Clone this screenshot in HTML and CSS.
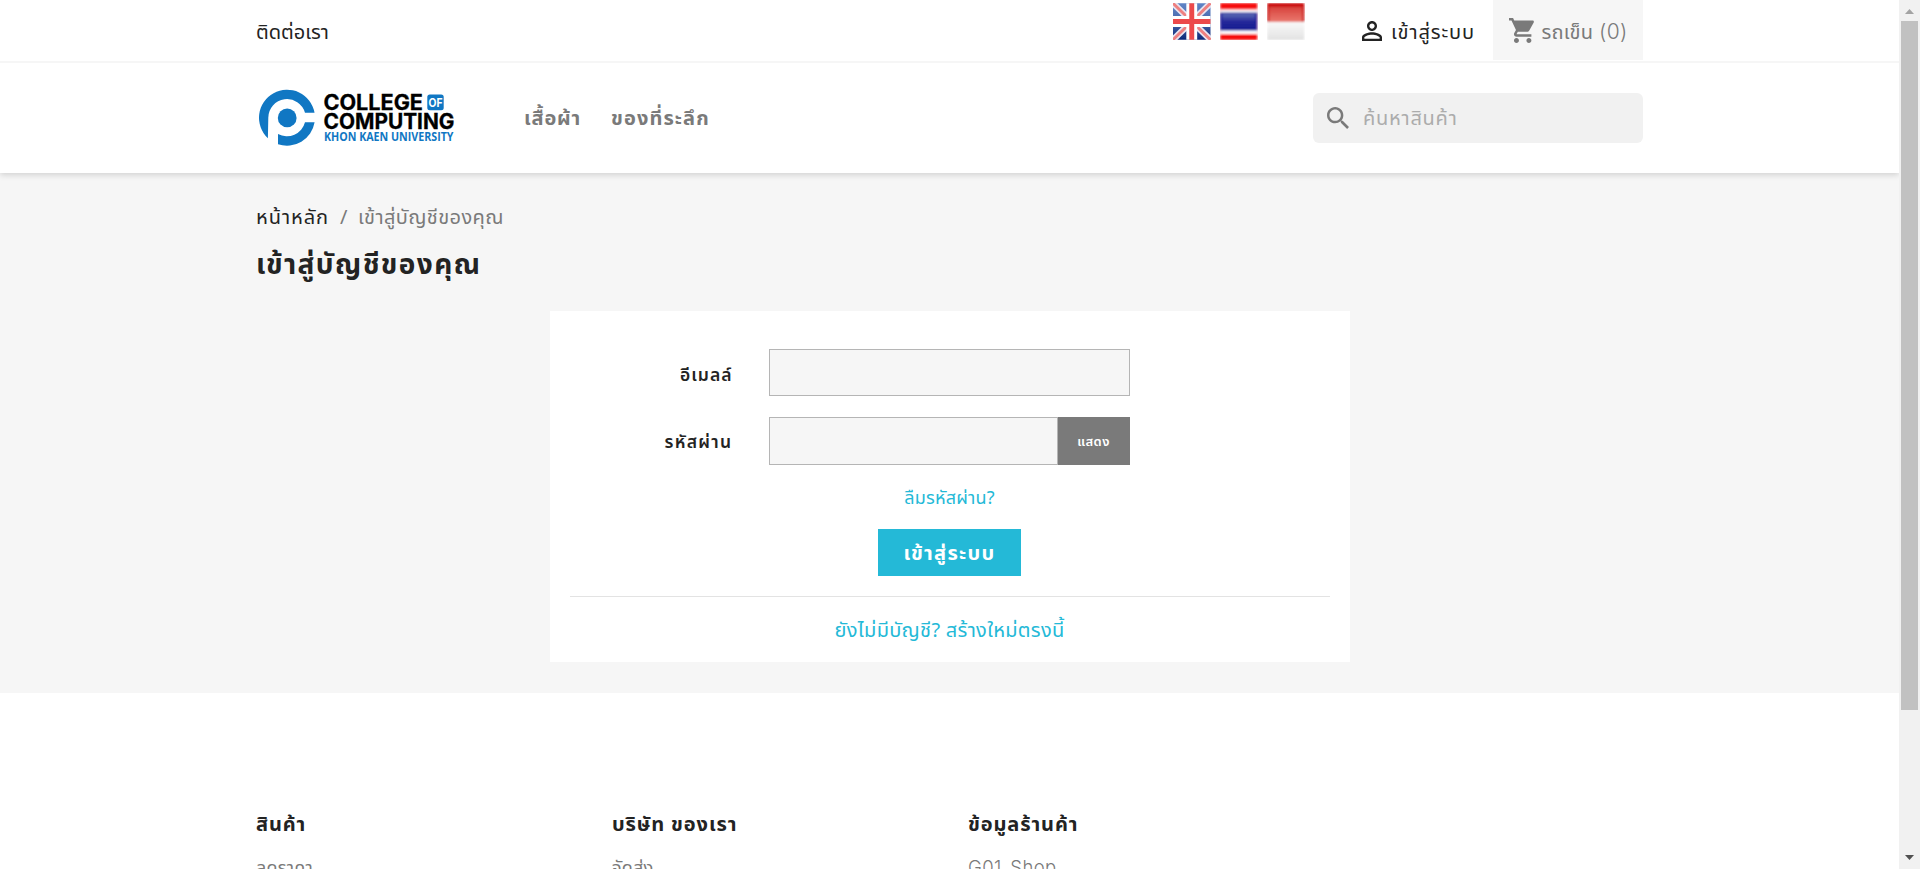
FILE: index.html
```html
<!DOCTYPE html>
<html lang="th">
<head>
<meta charset="utf-8">
<title>เข้าสู่บัญชีของคุณ</title>
<link rel="stylesheet" href="styles.css">
</head>
<body>
<div class="page">
  <header class="header">
    <nav class="topbar">
      <div class="container topbar-row">
        <a class="contact">ติดต่อเรา</a>
        <div class="flags">
          <svg class="flag" viewBox="0 0 38 37">
            <defs>
              <linearGradient id="uk" x2="0" y2="1"><stop offset="0" stop-color="#5f84c6"/><stop offset=".5" stop-color="#4868ac"/><stop offset="1" stop-color="#0c2878"/></linearGradient>
              <linearGradient id="th" x2="0" y2="1"><stop offset="0" stop-color="#5c6cb4"/><stop offset=".5" stop-color="#26289a"/><stop offset="1" stop-color="#141c90"/></linearGradient>
              <linearGradient id="idr" x2="0" y2="1"><stop offset="0" stop-color="#d8433c"/><stop offset="1" stop-color="#ea7a70"/></linearGradient>
              <linearGradient id="idw" x2="0" y2="1"><stop offset="0" stop-color="#fafafa"/><stop offset="1" stop-color="#e2e2e2"/></linearGradient>
              <filter id="soft" x="0" y="0" width="1" height="1"><feGaussianBlur stdDeviation=".8" edgeMode="duplicate"/></filter>
            </defs>
            <g filter="url(#soft)">
              <rect width="38" height="37" fill="url(#uk)"/>
              <path d="M0 0L38 37M38 0L0 37" stroke="#e8e4f0" stroke-width="6.500"/>
              <path d="M0 0L38 37M38 0L0 37" stroke="#ee8080" stroke-width="3"/>
              <path d="M19 0V37M0 18.500H38" stroke="#fff" stroke-width="11"/>
              <path d="M19 0V37M0 18.500H38" stroke="#ec4a4c" stroke-width="5"/>
            </g>
          </svg>
          <svg class="flag" viewBox="0 0 37 37">
            <g filter="url(#soft)">
              <rect width="37" height="37" fill="#f60a10"/>
              <rect y="6.500" width="37" height="24.500" fill="#fff"/>
              <rect y="9.500" width="37" height="18" fill="#141a9a"/>
              <rect x="2" y="11" width="33" height="15" fill="url(#th)"/>
            </g>
          </svg>
          <svg class="flag" viewBox="0 0 37 37">
            <g filter="url(#soft)">
              <rect width="37" height="19" fill="#cb0c0c"/>
              <rect x="2" y="4" width="33" height="15" fill="url(#idr)"/>
              <rect y="19" width="37" height="18" fill="url(#idw)"/>
            </g>
          </svg>
        </div>
        <a class="signin">
          <svg class="icon-user" viewBox="4 4 16 16"><path fill="#232323" d="M12 5.900c1.160 0 2.100.94 2.100 2.100s-.94 2.100-2.100 2.100S9.900 9.160 9.900 8s.94-2.100 2.100-2.100m0 9c2.970 0 6.100 1.460 6.100 2.100v1.100H5.900V17c0-.64 3.130-2.100 6.100-2.100M12 4C9.790 4 8 5.790 8 8s1.790 4 4 4 4-1.790 4-4-1.790-4-4-4zm0 9c-2.670 0-8 1.340-8 4v3h16v-3c0-2.660-5.330-4-8-4z"/></svg>
          <span class="signin-text">เข้าสู่ระบบ</span>
        </a>
        <div class="cart">
          <svg class="icon-cart" viewBox="1 2 20.500 20"><path fill="#7a7a7a" d="M7 18c-1.100 0-1.990.9-1.990 2S5.900 22 7 22s2-.9 2-2-.9-2-2-2zM1 2v2h2l3.600 7.590-1.350 2.450c-.16.28-.25.61-.25.960 0 1.100.9 2 2 2h12v-2H7.420c-.14 0-.25-.11-.25-.25l.03-.12.9-1.630h7.450c.75 0 1.410-.41 1.750-1.030l3.580-6.490c.08-.14.12-.31.12-.48 0-.55-.45-1-1-1H5.210l-.94-2H1zm16 16c-1.100 0-1.990.9-1.990 2s.89 2 1.990 2 2-.9 2-2-.9-2-2-2z"/></svg>
          <span class="cart-text">รถเข็น</span><span class="cart-count">(0)</span>
        </div>
      </div>
    </nav>
    <div class="container mainbar">
      <svg class="logo" viewBox="0 0 202 62">
        <path fill="#1077c3" d="M58.550 25.700A28 28 0 1 0 11.900 51.200L12.300 30.700A18.700 18.700 0 0 1 49 25.700Z"/>
        <path fill="#1077c3" d="M58.600 35.300A28 28 0 0 1 22 57.200V47.100A18.700 18.700 0 0 0 49 35.300Z"/>
        <circle cx="31.200" cy="30.900" r="9.400" fill="#1077c3"/>
        <g class="logo-name">
          <text x="67.500" y="23.300" textLength="99.500" lengthAdjust="spacingAndGlyphs">COLLEGE</text>
          <text x="67.500" y="41.700" textLength="131" lengthAdjust="spacingAndGlyphs">COMPUTING</text>
        </g>
        <rect x="171.300" y="7.500" width="16.400" height="15.700" rx="2.500" fill="#1077c3"/>
        <text class="logo-of" x="172.500" y="19.500" textLength="14" lengthAdjust="spacingAndGlyphs">OF</text>
        <text class="logo-uni" x="68" y="53.700" textLength="129.500" lengthAdjust="spacingAndGlyphs">KHON KAEN UNIVERSITY</text>
      </svg>
      <div class="menu"><a class="menu-a">เสื้อผ้า</a><a class="menu-b">ของที่ระลึก</a></div>
      <div class="search">
        <svg class="icon-search" viewBox="3 3 17.500 17.500"><path fill="#7a7a7a" d="M15.500 14h-.79l-.28-.27C15.410 12.590 16 11.110 16 9.500 16 5.910 13.090 3 9.500 3S3 5.910 3 9.500 5.910 16 9.500 16c1.610 0 3.090-.59 4.230-1.570l.27.28v.79l5 4.990L20.490 19l-4.990-5zm-6 0C7.010 14 5 11.990 5 9.500S7.010 5 9.500 5 14 7.010 14 9.500 11.990 14 9.500 14z"/></svg>
        <span class="search-text">ค้นหาสินค้า</span>
      </div>
    </div>
  </header>
  <main class="wrapper">
    <div class="container">
      <nav class="breadcrumb"><a class="crumb-home">หน้าหลัก</a><span class="crumb-sep">/</span><span class="crumb-here">เข้าสู่บัญชีของคุณ</span></nav>
      <h1 class="title">เข้าสู่บัญชีของคุณ</h1>
      <section class="card">
        <div class="field field-email"><label class="label label-email">อีเมลล์</label><div class="input"></div></div>
        <div class="field field-pass"><label class="label label-pass">รหัสผ่าน</label><div class="input"></div><button class="show">แสดง</button></div>
        <a class="forgot">ลืมรหัสผ่าน?</a>
        <button class="submit">เข้าสู่ระบบ</button>
        <div class="rule"></div>
        <a class="create">ยังไม่มีบัญชี? สร้างใหม่ตรงนี้</a>
      </section>
    </div>
  </main>
  <footer class="container footer">
    <div class="col"><h3 class="col-title">สินค้า</h3><a class="col-link">ลดราคา</a></div>
    <div class="col"><h3 class="col-title">บริษัท ของเรา</h3><a class="col-link">จัดส่ง</a></div>
    <div class="col"><h3 class="col-title">ข้อมูลร้านค้า</h3><a class="col-link col-shop">G01_Shop</a></div>
  </footer>
</div>
<div class="scrollbar">
  <svg class="arrow" viewBox="0 0 21 21"><path fill="#a3a3a3" d="M6 14L10.500 9L15 14Z"/></svg>
  <div class="thumb"></div>
  <svg class="arrow" viewBox="0 0 21 21"><path fill="#505050" d="M6 7H15L10.500 12Z"/></svg>
</div>
</body>
</html>
```
FILE: styles.css
```css
* { box-sizing: border-box; }
body {
  margin: 0; height: 869px; overflow: hidden; display: flex;
  background: #fff; color: #232323;
  font: 20px/30px "Noto Sans", "Noto Sans Thai", "Open Sans", sans-serif;
}
span, a { white-space: nowrap; }
.page { width: 1899px; height: 869px; overflow: hidden; }
.container { width: 1387px; margin: 0 auto; }
.header { height: 173px; background: #fff; position: relative; box-shadow: 0 2px 6px rgba(0,0,0,.15); }
.topbar { height: 63px; border-bottom: 2px solid #f6f6f6; }
.topbar-row { display: flex; height: 60px; }
.contact { padding-top: 17px; width: 917px; }
.flags { display: flex; gap: 9.500px; padding-top: 3px; width: 188px; }
.flag { width: 37.500px; height: 37px; }
.signin { display: flex; width: 132px; }
.icon-user { width: 20px; height: 20px; margin: 21px 0 0 .5px; }
.signin-text { padding: 17px 0 0 9.500px; letter-spacing: .9px; }
.cart { display: flex; width: 150px; height: 60px; background: #f6f6f6; color: #7a7a7a; padding-left: 16px; }
.icon-cart { width: 25.500px; height: 25px; margin-top: 17.500px; }
.cart-text { padding: 17px 0 0 7px; width: 64.500px; letter-spacing: .2px; }
.cart-count { padding-top: 17px; font: 300 21px/30px Inter, sans-serif; letter-spacing: .4px; }
.mainbar { display: flex; height: 110px; }
.logo { width: 202px; height: 62px; margin: 24px 66px 0 0; }
.logo-name { font: 700 21.300px Inter, sans-serif; fill: #000; stroke: #000; stroke-width: .3px; }
.logo-of { font: 700 11.500px Inter, sans-serif; fill: #fff; }
.logo-uni { font: 700 11.700px "Open Sans", sans-serif; fill: #1077c3; }
.menu { display: flex; width: 789px; padding-top: 40px; font-weight: 700; color: #7a7a7a; }
.menu-a { width: 87px; letter-spacing: .8px; }
.menu-b { letter-spacing: 1.100px; }
.search { display: flex; width: 330px; height: 50px; margin-top: 30px; border-radius: 6px; background: #f1f1f1; padding-left: 14px; }
.icon-search { width: 22px; height: 22px; margin-top: 13.500px; }
.search-text { padding: 10px 0 0 14px; color: #acacac; letter-spacing: .75px; }
.wrapper { height: 520px; background: #f6f6f6; padding-top: 29px; }
.breadcrumb { display: flex; height: 30px; color: #7a7a7a; letter-spacing: .4px; }
.crumb-home { width: 84px; color: #232323; letter-spacing: .95px; }
.crumb-sep { width: 18px; }
.title { margin: 12px 0 0; height: 39px; font-size: 28px; line-height: 39px; font-weight: 700; letter-spacing: 1.400px; }
.card { width: 800px; height: 351px; margin: 28px auto 0; background: #fff; padding: 38px 20px 0; display: flex; flex-direction: column; align-items: center; }
.field { display: flex; width: 760px; }
.field-email { height: 47px; margin-bottom: 21px; }
.field-pass { height: 48px; }
.label { width: 163px; margin-right: 36px; text-align: right; font-weight: 600; font-size: 17.500px; line-height: 50px; letter-spacing: 1px; }
.label-pass { line-height: 49px; letter-spacing: 1.300px; }
.input { flex: none; width: 361px; border: 1px solid #b5b5b5; background: #f6f6f6; }
.field-pass .input { width: 289px; }
.show { width: 72px; border: 0; padding: 0; background: #7a7a7a; color: #fff; font: 600 13px/48px "Noto Sans", "Noto Sans Thai", sans-serif; letter-spacing: .4px; }
.forgot, .create { color: #24b9d7; letter-spacing: .2px; }
.forgot { height: 30px; margin-top: 17px; font-size: 18px; }
.submit { width: 143px; height: 47px; margin-top: 17px; border: 0; padding: 0; background: #24b9d7; color: #fff; font: 700 20px/47px "Noto Sans", "Noto Sans Thai", sans-serif; letter-spacing: 1.300px; }
.rule { width: 760px; height: 1px; margin-top: 20px; background: #e3e3e3; }
.create { margin-top: 18px; letter-spacing: .3px; }
.footer { display: flex; padding-top: 116px; height: 176px; }
.col { width: 356px; height: 60px; }
.col-title { margin: 0 0 13px; height: 30px; font-size: 20px; line-height: 30px; font-weight: 700; letter-spacing: .9px; }
.col-link { display: block; color: #7a7a7a; font-size: 18px; letter-spacing: .2px; }
.col-shop { font: 300 18.500px/30px Inter, sans-serif; letter-spacing: .4px; }
.scrollbar { width: 21px; height: 869px; background: #f1f1f1; }
.arrow { display: block; width: 21px; height: 21px; }
.thumb { width: 17px; height: 689px; margin: 0 2px 138px; background: #c1c1c1; }
```
